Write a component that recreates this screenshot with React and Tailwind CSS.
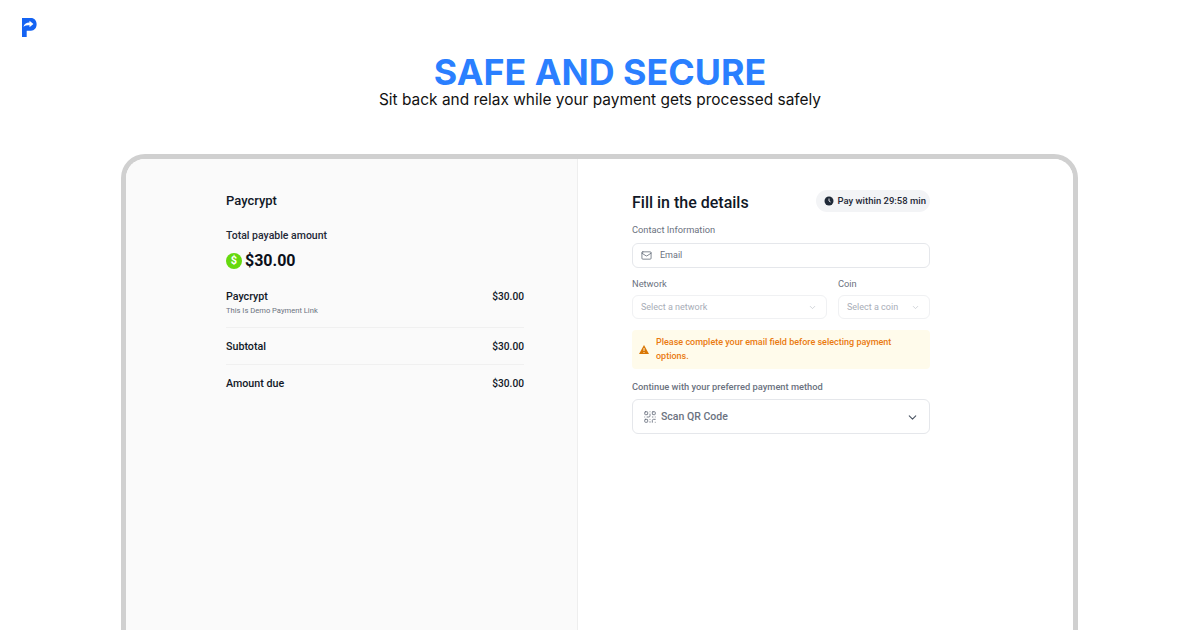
import React from "react";
import { Mail, ChevronDown, QrCode } from "lucide-react";

const ui = "font-['Roboto','Noto_Sans',sans-serif]";

function Logo() {
  return (
    <svg width="15" height="19" viewBox="0 0 16 18" preserveAspectRatio="none" className="block">
      <path d="M0 0H9.5C13.2 0 15.6 2.4 15.6 6C15.6 9.6 13.2 12 9.5 12H5V18H0V7.5H0V0Z" fill="#1463f3" />
      <path d="M1.5 8.2C2.6 5.4 5.2 4.2 8 4.3V2.5L12.2 5.6L8 8.7V6.9C5.8 6.6 3.6 7 1.5 8.2Z" fill="#fff" />
    </svg>
  );
}

function Row({ label, children }) {
  return (
    <div className="flex items-start justify-between">
      <div>
        <p className="text-[10.7px] leading-[14px] font-medium text-[#111827]">{label}</p>
        {children}
      </div>
      <span className="text-[10.2px] leading-[14px] font-medium text-[#111827]">$30.00</span>
    </div>
  );
}

function Summary() {
  return (
    <div className="w-[452px] shrink-0 border-r border-[#eeeeee] bg-[#fafafa] pl-[100px] pr-[53px] pt-[33px]">
      <h2 className="text-[13px] leading-[18px] font-medium text-[#111827]">Paycrypt</h2>
      <p className="mt-[19px] text-[10.5px] leading-[14px] font-medium text-[#1f2937]">Total payable amount</p>
      <div className="mt-[7px] flex items-center gap-[3px]">
        <span className="flex h-4 w-4 items-center justify-center rounded-full bg-[#66d90e] text-[11px] font-bold text-white">$</span>
        <span className="text-[16px] leading-[22px] font-bold text-[#0b0f19]">$30.00</span>
      </div>
      <div className="mt-[18px] border-b border-[#f0f0f0] pb-[11px]">
        <Row label="Paycrypt">
          <p className="mt-[1px] text-[7.6px] leading-[11px] text-[#6b7280]">This Is Demo Payment Link</p>
        </Row>
      </div>
      <div className="border-b border-[#f0f0f0] pt-3 pb-[10px]">
        <Row label="Subtotal" />
      </div>
      <div className="py-3">
        <Row label="Amount due" />
      </div>
    </div>
  );
}

function Details() {
  return (
    <div className="flex-1 bg-white pl-[54px] pt-[31px]">
      <div className="w-[298px]">
        <div className="flex items-start justify-between">
          <h2 className="pt-[2px] text-[16px] leading-[22px] font-medium text-[#111827]">Fill in the details</h2>
          <div className="flex h-[22px] w-[114px] items-center justify-end gap-[3px] rounded-full bg-[#f3f4f6] pr-[4px] text-[9.5px] font-medium text-[#1f2937]">
            <svg width="10" height="10" viewBox="0 0 10 10">
              <circle cx="5" cy="5" r="4.5" fill="#1f2937" />
              <path d="M5 2.5V5L6.6 6" stroke="#f3f4f6" strokeWidth="0.9" fill="none" />
            </svg>
            Pay within 29:58 min
          </div>
        </div>
        <p className="mt-[9px] text-[9.3px] leading-[13px] text-[#6b7280]">Contact Information</p>
        <div className="mt-[7px] flex h-[25px] items-center gap-[8px] rounded-md border border-[#e5e7eb] pl-2 text-[9px] text-[#6b7280]">
          <Mail size={11} strokeWidth={1.5} className="text-[#4b5563]" />
          Email
        </div>
        <div className="mt-[9px] flex gap-[11px]">
          <div className="w-[195px]">
            <p className="text-[9.3px] leading-[13px] text-[#6b7280]">Network</p>
            <div className="mt-[5px] flex h-[24px] items-center justify-between rounded-md border border-[#f0f1f3] pl-2 pr-[9px] pt-[1px] text-[9px] text-[#a8adb7]">
              Select a network
              <ChevronDown size={9} className="text-[#c4c8cf]" />
            </div>
          </div>
          <div className="flex-1">
            <p className="text-[9.3px] leading-[13px] text-[#6b7280]">Coin</p>
            <div className="mt-[5px] flex h-[24px] items-center justify-between rounded-md border border-[#f0f1f3] pl-2 pr-[9px] pt-[1px] text-[9px] text-[#a8adb7]">
              Select a coin
              <ChevronDown size={9} className="text-[#c4c8cf]" />
            </div>
          </div>
        </div>
        <div className="mt-[11px] flex h-[39px] items-center gap-[7px] rounded bg-[#fffbeb] pb-[2px] pl-[7px] pr-8 text-[9px] leading-[14px] font-medium text-[#ea7a10]">
          <svg width="10" height="9" viewBox="0 0 10 9" className="mt-[2px] shrink-0">
            <path d="M5 0L10 9H0Z" fill="#d97706" />
            <path d="M5 3V6M5 7V8" stroke="#fffbeb" strokeWidth="0.9" />
          </svg>
          <p>Please complete your email field before selecting payment options.</p>
        </div>
        <p className="mt-[11px] text-[9.3px] leading-[13px] font-medium text-[#6b7280]">Continue with your preferred payment method</p>
        <div className="mt-[6px] flex h-[35px] items-center rounded-md border border-[#e5e7eb] pl-[10px] pr-[10px] pt-[1px] text-[10.5px] font-medium text-[#6b7280]">
          <QrCode size={14} strokeWidth={1.5} className="mr-[4px]" />
          Scan QR Code
          <ChevronDown size={13} className="ml-auto text-[#4b5563]" />
        </div>
      </div>
    </div>
  );
}

export default function App() {
  return (
    <div className={`h-[630px] w-[1200px] overflow-hidden bg-white ${ui}`}>
      <div className="pl-[22px] pt-[18px]">
        <Logo />
      </div>
      <div className="mt-[17px] text-center font-['Inter',sans-serif]">
        <h1 className="text-[35.8px] leading-[36px] font-bold text-[#2a7fff]">SAFE AND SECURE</h1>
        <p className="mt-[1px] text-[15.45px] leading-[18px] text-[#111111]">Sit back and relax while your payment gets processed safely</p>
      </div>
      <div className="ml-[121px] mt-[45px] flex h-[500px] w-[957px] overflow-hidden rounded-t-[24px] border-[5px] border-b-0 border-[#d0d0d0]">
        <Summary />
        <Details />
      </div>
    </div>
  );
}
